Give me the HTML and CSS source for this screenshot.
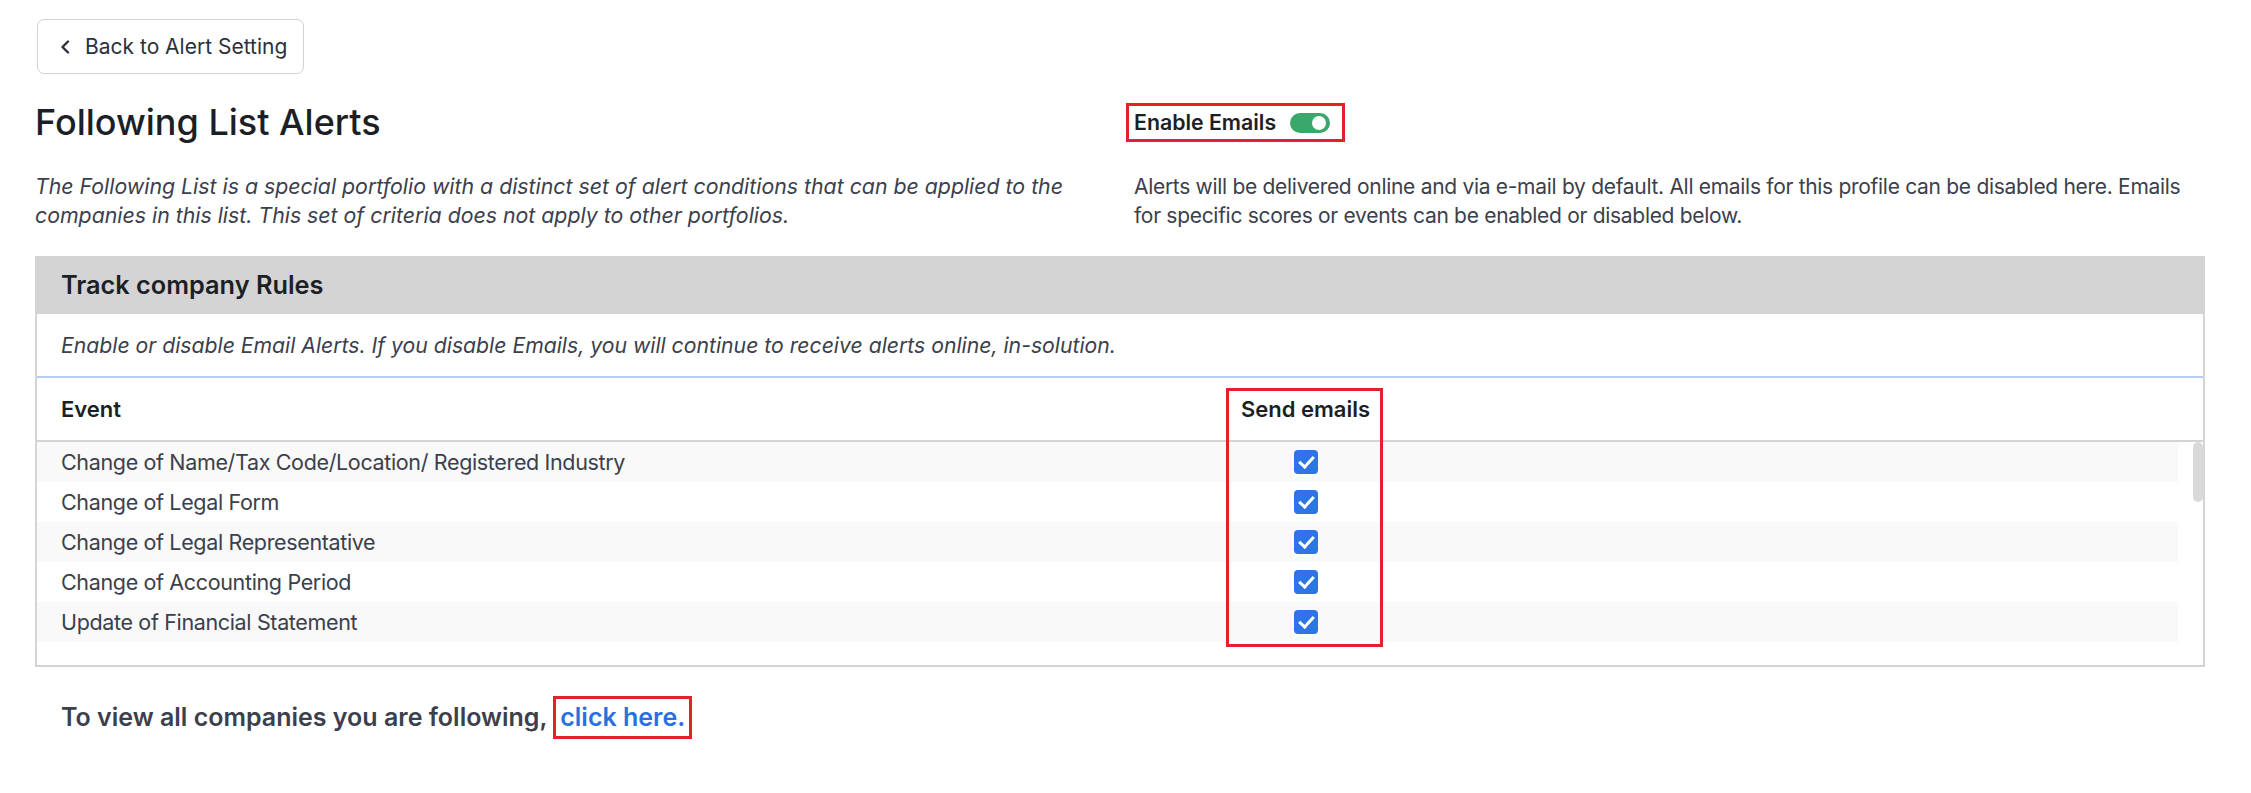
FILE: index.html
```html
<!DOCTYPE html>
<html lang="en">
<head>
    <meta charset="UTF-8">
    <title>Following List Alerts</title>
    <link rel="stylesheet" href="styles.css">
</head>
<body>
    <div class="fl_page">
        <a class="fl_back" href="#">
            <svg class="fl_back-icon" width="10" height="14" viewBox="0 0 10 14"><path d="M8 1.5 2.5 7 8 12.5" fill="none" stroke="#2b303b" stroke-width="2.4" stroke-linecap="round" stroke-linejoin="round"/></svg>
            <span>Back to Alert Setting</span>
        </a>

        <div class="fl_intro">
            <h1 class="fl_title">Following List Alerts</h1>
            <div class="fl_switch-wrap">
                <label class="fl_switch mark">
                    <span>Enable Emails</span>
                    <i class="fl_toggle"></i>
                </label>
            </div>
            <p class="fl_desc fl_desc-italic">The Following List is a special portfolio with a distinct set of alert conditions that can be applied to the companies in this list. This set of criteria does not apply to other portfolios.</p>
            <p class="fl_desc">Alerts will be delivered online and via e-mail by default. All emails for this profile can be disabled here. Emails for specific scores or events can be enabled or disabled below.</p>
        </div>

        <div class="fl_panel">
            <div class="fl_panel-head">Track company Rules</div>
            <div class="fl_panel-note">Enable or disable Email Alerts. If you disable Emails, you will continue to receive alerts online, in-solution.</div>

            <div class="fl_table">
                <div class="fl_row fl_row-head">
                    <div class="fl_cell">Event</div>
                    <div class="fl_cell fl_cell-check">Send emails</div>
                    <div class="fl_cell"></div>
                </div>
                <div class="fl_body">
                    <div class="fl_rows">
                        <div class="fl_row">
                            <div class="fl_cell">Change of Name/Tax Code/Location/ Registered Industry</div>
                            <div class="fl_cell fl_cell-check"><i class="fl_check"></i></div>
                            <div class="fl_cell"></div>
                        </div>
                        <div class="fl_row">
                            <div class="fl_cell">Change of Legal Form</div>
                            <div class="fl_cell fl_cell-check"><i class="fl_check"></i></div>
                            <div class="fl_cell"></div>
                        </div>
                        <div class="fl_row">
                            <div class="fl_cell">Change of Legal Representative</div>
                            <div class="fl_cell fl_cell-check"><i class="fl_check"></i></div>
                            <div class="fl_cell"></div>
                        </div>
                        <div class="fl_row">
                            <div class="fl_cell">Change of Accounting Period</div>
                            <div class="fl_cell fl_cell-check"><i class="fl_check"></i></div>
                            <div class="fl_cell"></div>
                        </div>
                        <div class="fl_row">
                            <div class="fl_cell">Update of Financial Statement</div>
                            <div class="fl_cell fl_cell-check"><i class="fl_check"></i></div>
                            <div class="fl_cell"></div>
                        </div>
                    </div>
                    <div class="fl_scroll"><i class="fl_scroll-thumb"></i></div>
                </div>
                <!-- annotation box over the "Send emails" column -->
                <div class="fl_col-mark"></div>
            </div>
        </div>

        <p class="fl_foot">To view all companies you are following, <a class="fl_link mark" href="#">click here.</a></p>
    </div>
</body>
</html>
```

FILE: styles.css
```css
*{ box-sizing: border-box; }
body{ margin: 0; background: #fff; font: 22px/29px Inter, "Noto Sans", "Liberation Sans", sans-serif; color: #3b404c; -webkit-font-smoothing: antialiased;}
p{ margin: 0; }

.fl_page{ padding: 19px 46px 0 35px; }

/* back button */
.fl_back{ display: inline-flex; align-items: center; margin-left: 2px; height: 55px; padding: 0 16px 0 22px; border: 1.5px solid #d2d2d2; border-radius: 7px; color: #2b303b; text-decoration: none; font-size: 21px; }
.fl_back-icon{ margin-right: 15px; }

/* intro: title + switch, two descriptions */
.fl_intro{ display: grid; grid-template-columns: 1fr 1fr; column-gap: 28px; margin-top: 29px; }
.fl_title{ margin: 0; font-size: 36px; line-height: 39px; font-weight: 500; color: #1c1f26; align-self: center; }
.fl_switch-wrap{ margin-left: -8px; }
.fl_switch{ display: inline-flex; align-items: center; height: 39px; padding: 0 12px 0 5px; font-size: 21.3px; font-weight: 600; color: #1c1f26; }
.fl_toggle{ position: relative; display: inline-block; width: 40px; height: 20px; margin-left: 14px; border-radius: 10px; background: #3aa86b; }
.fl_toggle:after{ content: ""; position: absolute; right: 4px; top: 3px; width: 14px; height: 14px; border-radius: 50%; background: #fff; }
.fl_desc{ margin-top: 30px; font-size: 21px; letter-spacing: -0.3px; }
.fl_desc-italic{ font-style: italic; font-size: 21.3px; letter-spacing: 0; }

.mark{ border: 3px solid #e4202b; }

/* panel */
.fl_panel{ margin-top: 26px; border: 2px solid #d4d4d4; border-top: 0; }
.fl_panel-head{ height: 58px; padding: 0 24px; background: #d4d4d4; font-size: 25.3px; font-weight: 600; line-height: 58px; color: #1c1f26; }
.fl_panel-note{ height: 64px; padding: 0 24px; border-bottom: 2px solid #b6cdf3; font-style: italic; font-size: 21.2px; line-height: 62px; }

.fl_table{ position: relative; }
.fl_row{ display: grid; grid-template-columns: 1191px 155px 1fr; align-items: center; height: 40px; font-size: 21.5px; letter-spacing: -0.35px; }
.fl_cell{ padding: 0 24px; white-space: nowrap; }
.fl_cell-check{ display: flex; justify-content: center; padding: 0; }
.fl_row-head{ height: 64px; border-bottom: 2px solid #d4d4d4; font-size: 22px; font-weight: 600; letter-spacing: 0; color: #1c1f26; }

.fl_body{ display: flex; height: 223px; }
.fl_rows{ flex: 1; }
.fl_rows .fl_row:nth-child(odd){ background: #f9f9f9; }
.fl_scroll{ width: 25px; padding-left: 15px; }
.fl_scroll-thumb{ display: block; width: 10px; height: 60px; border-radius: 5px; background: #d9d9d9; }

.fl_check{ position: relative; display: block; width: 24px; height: 24px; border-radius: 4px; background: #2f74e6; }
.fl_check:after{ content: ""; position: absolute; left: 8px; top: 3px; width: 6px; height: 12px; border: solid #fff; border-width: 0 3px 3px 0; transform: rotate(42deg); }

.fl_col-mark{ position: absolute; left: 1189px; top: 10px; width: 157px; height: 259px; border: 3px solid #e4202b; pointer-events: none; }

/* footer */
.fl_foot{ margin-top: 29px; padding-left: 26px; font-size: 25px; line-height: 37px; font-weight: 600; color: #3b404c; }
.fl_link{ display: inline-block; padding: 0 4px; color: #2a70e0; text-decoration: none; line-height: 37px; }
```
